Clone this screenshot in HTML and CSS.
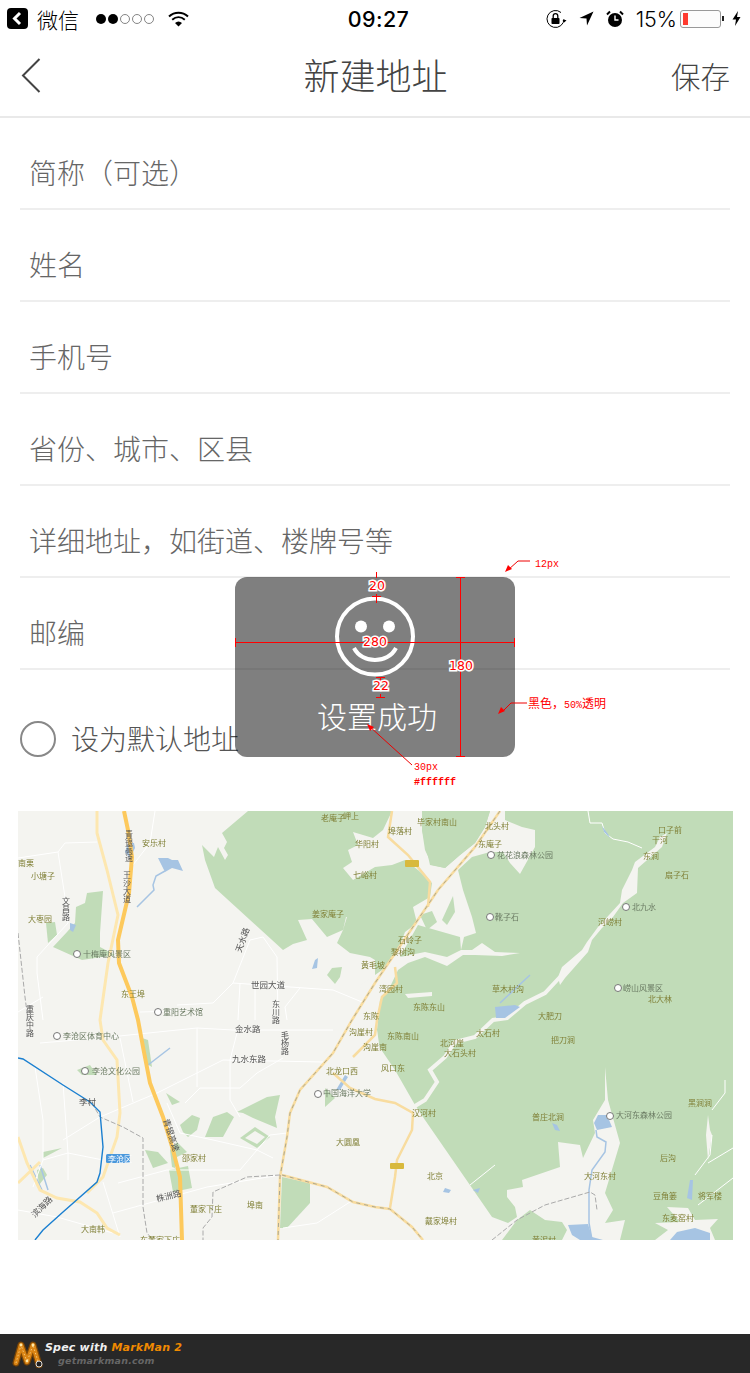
FILE: index.html
```html
<!DOCTYPE html>
<html lang="zh-CN">
<head>
<meta charset="utf-8">
<title>新建地址</title>
<link rel="stylesheet" href="styles.css">
</head>
<body>
<div class="page">
  <header class="status">
    <div class="status-left">
      <svg class="s-back" width="21" height="21" viewBox="0 0 21 21"><rect width="21" height="21" rx="4" fill="#000"/><path d="M13 5 L7.5 10.5 L13 16" fill="none" stroke="#fff" stroke-width="3"/></svg>
      <span class="s-app">微信</span>
      <svg class="s-dots" width="60" height="12" viewBox="0 0 60 12"><circle cx="6" cy="6" r="5" fill="#000"/><circle cx="18" cy="6" r="5" fill="#000"/><circle cx="30" cy="6" r="4.5" fill="none" stroke="#666" stroke-width=".8"/><circle cx="42" cy="6" r="4.5" fill="none" stroke="#666" stroke-width=".8"/><circle cx="54" cy="6" r="4.5" fill="none" stroke="#666" stroke-width=".8"/></svg>
      <svg class="s-wifi" width="21" height="16" viewBox="0 0 21 16"><path d="M1 5.5 C6.5 .5 14.5 .5 20 5.5" fill="none" stroke="#000" stroke-width="2"/><path d="M4.2 8.8 C8 5.5 13 5.5 16.8 8.8" fill="none" stroke="#000" stroke-width="2"/><path d="M7 12 C9.2 10 11.8 10 14 12 L10.5 15.5 Z" fill="#000"/></svg>
    </div>
    <div class="s-time">09:27</div>
    <div class="status-right">
      <svg class="s-lock" width="21" height="20" viewBox="0 0 21 20"><path d="M18 10 A8.5 8.5 0 1 1 15 3.500" fill="none" stroke="#000" stroke-width="1"/><path d="M16.500 11 L20.500 11 L18.500 13.500 Z" fill="#000"/><rect x="5.500" y="9" width="8" height="6" rx=".8" fill="#000"/><path d="M7.200 9 V7 A2.300 2.300 0 0 1 11.800 7 V9" fill="none" stroke="#000" stroke-width="1.300"/></svg>
      <svg class="s-loc" width="15" height="15" viewBox="0 0 15 15"><path d="M14.500 .5 L.5 7 L7.500 7.500 L8 14.500 Z" fill="#000"/></svg>
      <svg class="s-alarm" width="18" height="18" viewBox="0 0 18 18"><circle cx="9" cy="10" r="7" fill="#000"/><path d="M9 5.500 V10 H12.500" fill="none" stroke="#fff" stroke-width="1.400"/><path d="M1 4.500 L4 1.500 M14 1.500 L17 4.500" stroke="#000" stroke-width="2"/></svg>
      <span class="s-pct">15%</span>
      <div class="battery"><div class="battery-fill"></div></div>
      <div class="battery-tip"></div>
      <svg class="s-bolt" width="9" height="15" viewBox="0 0 9 15"><path d="M6 0 L.5 8.500 H4 L3 15 L8.500 6 H5 Z" fill="#000"/></svg>
    </div>
  </header>

  <nav class="nav">
    <svg class="nav-back" width="20" height="36" viewBox="0 0 20 36"><path d="M18.500 1 L2 17.500 L18.500 34" fill="none" stroke="#444" stroke-width="2"/></svg>
    <h1 class="nav-title">新建地址</h1>
    <span class="nav-save">保存</span>
  </nav>

  <section class="form">
    <div class="field">简称（可选）</div>
    <div class="field">姓名</div>
    <div class="field">手机号</div>
    <div class="field">省份、城市、区县</div>
    <div class="field">详细地址，如街道、楼牌号等</div>
    <div class="field">邮编</div>
  </section>

  <div class="default-row">
    <span class="radio"></span>
    <span class="default-label">设为默认地址</span>
  </div>

  <svg class="map" width="715" height="429" viewBox="18 811 715 429">
    <rect x="18" y="811" width="715" height="429" fill="#f4f4f0"/>
    <!-- big forest -->
    <path class="g" d="M248 811 L733 811 L733 1240 L620 1240 L625 1220 L605 1223 L613 1210 L605 1193 L620 1143 L608 1100 L605 1067 L605 1100 L593 1120 L595 1133 L583 1158 L580 1145 L558 1142 L560 1167 L522 1180 L523 1187 L507 1190 L507 1197 L515 1207 L517 1217 L508 1223 L492 1217 L425 1120 L415 1105 L395 1070 L378 1045 L375 1000 L375 960 L370 957 L350 953 L337 943 L343 930 L347 917 L346 917 L343 930 L327 937 L312 919 L298 920 L307 940 L293 944 L283 950 L215 888 L205 860 L202 845 L214 857 L218 847 L225 860 L228 855 L224 848 L227 842 L222 833 Z"/>
    <!-- valleys -->
    <path class="w" d="M353 832 L373 838 L383 830 L392 811 L422 811 L422 830 L430 865 L445 868 L460 855 L475 843 L485 827 L490 811 L505 811 L505 820 L522 827 L535 830 L535 847 L520 874 L510 863 L503 852 L490 852 L472 857 L458 870 L463 890 L472 917 L476 933 L464 937 L461 950 L472 950 L482 943 L495 952 L520 953 L502 956 L475 955 L463 955 L447 966 L425 957 L408 963 L398 970 L390 987 L380 1000 L377 1030 L380 1050 L372 1052 L362 1000 L360 985 L375 975 L385 968 L400 945 L405 932 L417 923 L413 907 L430 897 L432 883 L418 870 L405 860 L392 865 L375 867 L353 880 L343 868 L352 862 L348 850 L358 845 Z"/>
    <path class="w" d="M660 837 L667 833 L662 847 L638 868 L637 893 L623 903 L613 917 L602 928 L592 940 L588 952 L565 978 L560 985 L558 977 L562 967 L582 950 L587 942 L598 927 L620 903 L622 890 L632 870 L635 862 L655 847 Z"/>
    <path class="wthick" d="M560 977 L545 993 L525 1003 L507 1018 L493 1020 L475 1037 L455 1042 L445 1057 L430 1070 L437 1082 L425 1100 L415 1106"/>
    <path class="w" d="M405 994 L432 992 L432 996 L408 998 Z"/>
    <path class="w" d="M667 1207 L688 1208 L695 1220 L718 1219 L710 1228 L715 1240 L655 1240 L668 1230 L655 1223 L680 1222 Z"/>
    <path class="w" d="M708 1115 L710 1130 L712 1135 L708 1160 L706 1135 Z"/>
    <path class="minor" d="M725 1080 L725 1093 L712 1110 M712 1135 L710 1155 L695 1175 M733 1148 L708 1163 M733 1178 L698 1205 M588 811 L590 823 L602 823 L605 833 L613 839 L628 842 L642 848 M470 1185 L495 1165"/>
    <!-- patches on top of valleys -->
    <path class="g" d="M400 957 L418 925 L460 937 L461 950 L447 957 L425 952 Z"/>
    <path class="g" d="M422 811 L490 811 L485 827 L475 843 L460 855 L445 868 L432 865 L425 850 L422 830 Z"/>
    <path class="g" d="M453 896 L455 912 L447 925 L442 920 Z"/>
    <path class="g" d="M420 915 L432 911 L437 922 L427 930 Z" />
    <path class="g" d="M502 1240 L517 1220 L530 1210 L545 1220 L562 1222 L567 1230 L562 1240 Z"/>
    <path class="g" d="M327 975 L332 968 L342 967 L340 977 L335 984 Z"/>
    <!-- west parks -->
    <path class="g" d="M87 893 L103 891 L100 933 L100 947 L115 955 L82 960 L53 947 L67 932 L75 923 L76 907 L85 903 Z"/>
    <path class="g" d="M46 923 L55 922 L57 935 L48 943 Z"/>
    <path class="g" d="M142 1038 L148 1040 L152 1067 L145 1063 Z"/>
    <path class="g" d="M166 1093 L180 1102 L172 1105 Z"/>
    <path class="g" d="M180 1125 L192 1115 L200 1118 L197 1130 L188 1137 L183 1132 Z"/>
    <path class="g" d="M205 1137 L213 1117 L227 1112 L234 1117 L223 1137 Z"/>
    <path class="g" d="M237 1112 L267 1097 L280 1095 L275 1117 L277 1128 L253 1118 L243 1113 Z"/>
    <path class="g" d="M240 1138 L255 1127 L270 1137 L257 1148 Z"/>
    <path class="w" d="M245 1138 L255 1131 L265 1137 L257 1144 Z"/>
    <path class="g" d="M145 1150 L158 1152 L168 1163 L153 1168 Z"/>
    <path class="g" d="M170 1150 L177 1142 L187 1152 L177 1157 L175 1168 L172 1167 Z"/>
    <path class="g" d="M169 1170 L188 1166 L192 1188 L173 1192 Z"/>
    <path class="g" d="M43 1152 L62 1148 L43 1158 Z"/>
    <path class="g" d="M37 1170 L43 1168 L47 1175 L39 1185 Z"/>
    <path class="g" d="M282 1177 L310 1183 L310 1203 L287 1228 L280 1228 Z"/>
    <path class="g" d="M325 1088 L335 1098 L325 1107 Z"/>
    <path class="g" d="M77 1070 L90 1065 L97 1075 L82 1075 Z"/>
    <!-- water -->
    <path class="b" d="M158 858 L168 858 L172 860 L178 860 L183 871 L172 868 L165 872 Z"/>
    <path class="bs" d="M165 871 L156 876 L153 885 L154 890 L148 896 L137 907"/>
    <path class="b" d="M128 843 L134 843 L135 848 L130 858 L125 852 Z"/>
    <path class="b" d="M70 923 L76 925 L73 932 L70 930 Z"/>
    <path class="b" d="M315 960 L318 958 L317 968 L312 969 Z"/>
    <path class="b" d="M602 826 L608 834 L610 838 L604 832 Z"/>
    <path class="bs" d="M530 975 L500 1003"/>
    <path class="b" d="M495 1007 L515 1005 L520 1007 L505 1018 L496 1018 Z"/>
    <path class="b" d="M598 1115 L607 1115 L612 1127 L597 1130 L594 1123 Z"/>
    <path class="bs" d="M596 1130 L597 1137 L606 1142 L605 1152 L592 1170 L589 1190 L589 1223 L592 1240"/>
    <path class="b" d="M568 1225 L588 1224 L592 1237 L603 1240 L580 1240 L572 1235 Z"/>
    <path class="b" d="M552 1123 L557 1125 L560 1131 L555 1130 Z"/>
    <path class="b" d="M690 1180 L693 1180 L692 1200 L687 1198 Z"/>
    <path class="b" d="M670 1240 L677 1232 L695 1228 L710 1233 L710 1240 Z"/>
    <path class="b" d="M445 1188 L451 1190 L449 1193 L443 1192 Z"/>
    <path class="b" d="M473 1190 L480 1188 L478 1193 Z"/>
    <path class="b" d="M336 1090 L345 1075 L348 1077 L340 1090 Z"/>
    <path class="bs" d="M148 1065 L170 1048"/>
    <path class="bs" d="M40 1165 L48 1190 M30 1165 L42 1190"/>
    <!-- minor roads -->
    <path class="minor" d="M18 858 L58 852 L65 843 L97 842 M58 852 L67 910 L68 923 L37 957 L37 973 L43 1020 M155 811 L150 843 L133 865 M177 1005 L213 1003 L233 983 L250 940 L263 937 L277 957 L278 1020 M233 983 L333 990 L362 1002 M240 983 L238 1020 M255 983 L255 1020 M300 988 L285 1007 L287 1020 M18 1012 L43 997 M140 1012 L177 1011 M40 1043 L100 1038 L197 1028 L233 1030 L333 1030 M197 1028 L197 1087 M237 1033 L230 1060 L230 1100 L240 1117 M157 1093 L223 1060 L323 1062 M63 1140 L100 1117 L157 1093 M43 1160 L68 1153 L103 1160 M63 1083 L68 1153 L68 1180 M185 1103 L200 1088 L240 1088 L257 1073 L283 1058 M167 1103 L180 1133 L213 1140 L257 1150 L273 1158 M240 1170 L257 1150 L270 1135 L287 1133 M118 1183 L167 1170 L240 1170 M113 1213 L207 1187 L280 1175 M103 1182 L120 1237 M35 1067 L43 1120 L43 1160 L33 1187 M120 1038 L133 1102 M283 1228 L317 1223 L350 1202 M18 1210 L57 1217 L113 1233"/>
    <!-- roads -->
    <path class="r2" d="M97 811 L97 833 L107 870 L118 915 L108 963 L100 1020 L103 1040 L117 1060 L120 1113 L117 1137 L103 1177 L87 1193"/>
    <path class="r2" d="M18 1137 L27 1163 L40 1190 L57 1198 L80 1202 L97 1213 L107 1228 L120 1235 M18 1183 L40 1162"/>
    <path class="r3" d="M392 811 L388 837 L408 855 L430 882 L428 907 M395 967 L397 983 L382 997 L377 1020 L375 1035 L353 1057 M333 1073 L350 1088 L375 1099 L395 1103 L413 1113 L412 1130 L397 1160 L395 1177 L390 1208"/>
    <path class="r3" d="M500 811 L475 847 L438 890 L375 983 L352 1020 L333 1053 L300 1090 L290 1113 L287 1137 L280 1177 L278 1240 M282 1175 L327 1187 L353 1202 L375 1207 L390 1209 L412 1227 L423 1240"/>
    <path class="rail" d="M500 811 L475 847 L438 890 L375 983 L352 1020 L333 1053 L300 1090 L290 1113 L287 1137 L280 1177 L278 1240 M282 1175 L327 1187 L353 1202 L375 1207 L390 1209 L412 1227 L423 1240"/>
    <path class="hw" d="M124 811 L128 830 L132 857 L129 893 L118 940 L119 963 L132 997 L138 1020 L143 1047 L150 1083 L163 1117 L173 1150 L180 1177 L182 1240"/>
    <path class="rail2" d="M92 1103 L100 1117 L123 1127 L143 1138 L143 1207 L147 1233 L153 1240 M280 1175 L247 1177 L213 1192 L212 1217 L203 1228 L203 1240 M18 933 L25 997 L28 1020 M492 1240 L517 1220 L545 1205 L590 1192 L595 1195 L597 1210"/>
    <path class="metro" d="M18 1058 L23 1059 L63 1085 L90 1102 L100 1112 L103 1147 L100 1173 L97 1182 L63 1212 L43 1230 L35 1240"/>
    <!-- POI markers -->
    <circle class="poi" cx="77" cy="954" r="3.500"/><circle class="poi" cx="158" cy="1012" r="3.500"/><circle class="poi" cx="57" cy="1036" r="3.500"/><circle class="poi" cx="85" cy="1071" r="3.500"/><circle class="poi" cx="318" cy="1094" r="3.500"/><circle class="poi" cx="491" cy="855" r="3.500"/><circle class="poi" cx="490" cy="917" r="3.500"/><circle class="poi" cx="626" cy="907" r="3.500"/><circle class="poi" cx="618" cy="988" r="3.500"/><circle class="poi" cx="610" cy="1116" r="3.500"/>
    <!-- badges -->
    <rect x="106" y="1154" width="24" height="9" rx="1.500" fill="#4a98dc"/>
    <rect x="405" y="860" width="14" height="7" rx="1" fill="#d8b93c"/>
    <rect x="390" y="1163" width="14" height="6" rx="1" fill="#d8b93c"/>
    <text class="t-badge" x="108" y="1162">李沧区</text>
    <!-- labels -->
    <text class="t" x="142" y="846">安乐村</text><text class="t" x="18" y="866">南栗</text><text class="t" x="31" y="879">小塘子</text><text class="t" x="28" y="922">大枣园</text><text class="t-grey" x="83" y="957">十梅庵风景区</text><text class="t" x="121" y="997">东王埠</text><text class="t" x="321" y="821">老庵子</text><text class="t" x="343" y="819">岬上</text><text class="t" x="355" y="847">华阳村</text><text class="t" x="353" y="878">七峪村</text><text class="t" x="312" y="917">姜家庵子</text><text class="t" x="361" y="968">黄毛坡</text><text class="t-road" x="251" y="988">世园大道</text><text class="t-grey" x="163" y="1015">重阳艺术馆</text><text class="t" x="363" y="1019">东陈</text>
    <text class="t" x="417" y="825">毕家村南山</text><text class="t" x="388" y="834">埠落村</text><text class="t" x="485" y="829">北头村</text><text class="t" x="478" y="847">东庵子</text><text class="t-grey" x="497" y="858">花花浪森林公园</text><text class="t" x="658" y="833">口子前</text><text class="t" x="652" y="843">干河</text><text class="t" x="643" y="859">东涧</text><text class="t" x="665" y="878">扇子石</text><text class="t-grey" x="632" y="910">北九水</text><text class="t-grey" x="495" y="920">靴子石</text><text class="t" x="598" y="925">河崂村</text><text class="t" x="398" y="943">石岭子</text><text class="t" x="391" y="955">黎树沟</text><text class="t" x="379" y="992">湾园村</text><text class="t" x="492" y="992">草木村沟</text><text class="t-grey" x="623" y="991">崂山风景区</text><text class="t" x="648" y="1002">北大林</text><text class="t" x="413" y="1010">东陈东山</text><text class="t" x="538" y="1019">大肥刀</text>
    <text class="t-grey" x="63" y="1039">李沧区体育中心</text><text class="t-grey" x="92" y="1074">李沧文化公园</text><text class="t-road" x="79" y="1105">李村</text><text class="t-road" x="235" y="1032">金水路</text><text class="t-road" x="232" y="1062">九水东路</text><text class="t" x="349" y="1035">沟崖村</text><text class="t" x="363" y="1050">沟崖南</text><text class="t" x="326" y="1074">北龙口西</text><text class="t-grey" x="323" y="1096">中国海洋大学</text><text class="t" x="336" y="1145">大圆凰</text><text class="t" x="182" y="1161">邵家村</text><text class="t" x="190" y="1212">董家下庄</text><text class="t" x="247" y="1208">埠南</text><text class="t" x="81" y="1232">大南韩</text><text class="t" x="140" y="1243">东董家下庄</text>
    <text class="t" x="387" y="1039">东陈南山</text><text class="t" x="476" y="1036">太石村</text><text class="t" x="440" y="1046">北河崖</text><text class="t" x="444" y="1056">大石头村</text><text class="t" x="551" y="1043">把刀涧</text><text class="t" x="381" y="1071">风口东</text><text class="t" x="412" y="1116">汉河村</text><text class="t" x="532" y="1120">普庄北涧</text><text class="t-grey" x="616" y="1118">大河东森林公园</text><text class="t" x="688" y="1106">黑涧涧</text><text class="t" x="660" y="1161">后沟</text><text class="t" x="427" y="1179">北京</text><text class="t" x="584" y="1179">大河东村</text><text class="t" x="653" y="1199">豆角篓</text><text class="t" x="698" y="1199">将军楼</text><text class="t" x="662" y="1221">东麦窑村</text><text class="t" x="425" y="1224">戴家埠村</text><text class="t" x="532" y="1243">黄泥村</text>
    <text class="t-v" x="129" y="830">青银高速</text><text class="t-v" x="127" y="871">王沙大道</text><text class="t-v" x="66" y="897">文昌路</text><text class="t-v" x="276" y="1000">东川路</text><text class="t-v" x="285" y="1031">毛杨路</text><text class="t-v" x="30" y="1005">重庆中路</text>
    <text class="t-road" transform="translate(241 953) rotate(-70)" x="0" y="0">天水路</text>
    <text class="t-road" transform="translate(163 1120) rotate(72)" x="0" y="0">青银高速</text>
    <text class="t-road" transform="translate(157 1202) rotate(-14)" x="0" y="0">株洲路</text>
    <text class="t-road" transform="translate(35 1218) rotate(-45)" x="0" y="0">滨海路</text>
  </svg>

  <footer class="brand">
    <svg class="brand-logo" width="32" height="28" viewBox="0 0 32 28"><path d="M4 23 L9 5 L15 22 L21 5 L27 25" fill="none" stroke="#7a4506" stroke-width="7" stroke-linecap="round" stroke-linejoin="round"/><path d="M4 23 L9 5 L15 22 L21 5 L27 25" fill="none" stroke="#d98414" stroke-width="4.500" stroke-linecap="round" stroke-linejoin="round"/><path d="M4 23 L9 5 L15 22 L21 5 L27 25" fill="none" stroke="#f6c778" stroke-width="1" stroke-dasharray="1.500 2"/><circle cx="9" cy="5" r="1.400" fill="#ffe9a8"/><circle cx="21" cy="5" r="1.400" fill="#ffe9a8"/><circle cx="15" cy="21" r="1.400" fill="#ffe9a8"/><circle cx="27" cy="24" r="3" fill="#222" stroke="#ddd" stroke-width="1"/></svg>
    <div class="brand-text">
      <div class="brand-line">Spec with <span class="brand-accent">MarkMan 2</span></div>
      <div class="brand-url">getmarkman.com</div>
    </div>
  </footer>

  <div class="toast">
    <svg class="toast-icon" width="80" height="81" viewBox="0 0 80 81"><circle cx="40" cy="40.500" r="38" fill="none" stroke="#fff" stroke-width="4"/><circle cx="26" cy="30.500" r="6" fill="#fff"/><circle cx="54" cy="30.500" r="6" fill="#fff"/><path d="M19 52 C27 68 53 68 61 52" fill="none" stroke="#fff" stroke-width="4"/></svg>
    <div class="toast-text">设置成功</div>
  </div>

  <svg class="marks" width="750" height="1373" viewBox="0 0 750 1373">
    <path class="mk" d="M235.500 642.500 H515 M235.500 638 V647 M514.500 638 V647 M460.500 577 V757 M456 577.500 H465 M456 756.500 H465 M376.500 572 V578 M376.500 594 V603 M372 596.500 H381 M380.500 677 V682 M376 677.500 H385 M376 697.500 H385 M380.500 694 V698"/>
    <path class="mk-thin" d="M530 561 H518 L508 570 M527 703 H511 L502 712 M412 765 L369 726"/>
    <path class="mk-fill" d="M505 572 L508 565 L512 569 Z M498 714 L501 707 L505 711 Z M367 724 L374 727 L370 731 Z"/>
    <text class="lab" x="375" y="646">280</text>
    <text class="lab" x="461" y="670">180</text>
    <text class="lab" x="377" y="590">20</text>
    <text class="lab" x="381" y="690">22</text>
    <text class="note" x="535" y="567">12px</text>
    <text class="note" x="528" y="708"><tspan class="note-cjk">黑色，</tspan>50%<tspan class="note-cjk">透明</tspan></text>
    <text class="note" x="414" y="770">30px</text>
    <text class="note note-bold" x="414" y="785">#ffffff</text>
  </svg>
</div>
</body>
</html>
```

FILE: styles.css
```css
* { box-sizing: border-box; }
html, body { margin: 0; padding: 0; }
body {
  background: #fff;
  font-family: "Noto Sans CJK SC", "Noto Sans", sans-serif;
  overflow: hidden;
}
.page {
  position: relative;
  width: 750px;
  height: 1373px;
  display: flex;
  flex-direction: column;
  overflow: hidden;
}
.status {
  height: 40px;
  display: grid;
  grid-template-columns: 1fr auto 1fr;
  align-items: center;
  padding: 0 9px 3px 7px;
  color: #000;
}
.status-left, .status-right { display: flex; align-items: center; }
.status-right { justify-content: flex-end; }
.s-app { font-size: 21px; margin-left: 9px; line-height: 24px; font-weight: 300; }
.s-dots { margin-left: 16px; }
.s-wifi { margin-left: 13px; }
.s-time { font-family: Inter, "Liberation Sans", sans-serif; font-size: 21.500px; font-weight: 500; letter-spacing: .4px; margin-left: 9px; }
.s-loc { margin-left: 12px; }
.s-alarm { margin-left: 12px; }
.s-pct { font-family: Inter, "Liberation Sans", sans-serif; font-size: 21.500px; font-weight: 300; margin-left: 12px; }
.battery { width: 41px; height: 18px; margin-left: 3px; border: 1px solid #999; border-radius: 3px; padding: 2px; background: #fcfcfc; }
.battery-fill { width: 5px; height: 100%; background: #ff3b30; }
.battery-tip { width: 2px; height: 5px; background: #222; margin-left: 1px; }
.s-bolt { margin-left: 8px; }

.nav {
  height: 78px;
  display: grid;
  grid-template-columns: 1fr auto 1fr;
  align-items: center;
  padding: 0 20px 5px 21px;
  border-bottom: 2px solid #e9e9e9;
  color: #444;
}
.nav-back { justify-self: start; }
.nav-title { margin: 0 0 4px; font-size: 36px; font-weight: 300; line-height: 50px; }
.nav-save { justify-self: end; font-size: 29.500px; font-weight: 300; line-height: 40px; margin-bottom: 2px; }

.form { padding: 0 20px; }
.field {
  height: 92px;
  padding: 34px 0 0 9px;
  border-bottom: 2px solid #eee;
  font-size: 28px;
  font-weight: 300;
  line-height: 40px;
  color: #666;
}
.default-row {
  display: flex;
  align-items: center;
  gap: 15px;
  margin: 50px 0 0 20px;
  height: 38px;
}
.radio { width: 36px; height: 36px; border: 2px solid #888; border-radius: 50%; }
.default-label { font-size: 28px; font-weight: 300; color: #555; line-height: 38px; margin-bottom: 2px; }

.map {
  display: block;
  margin: 53px 0 0 18px;
  filter: blur(.45px);
}
.g { fill: #c1dcb8; }
.w { fill: #f4f4f0; }
.wthick { fill: none; stroke: #f4f4f0; stroke-width: 4; }
.b { fill: #a6c4e3; }
.bs { fill: none; stroke: #a6c4e3; stroke-width: 1.500; }
.minor { fill: none; stroke: #fff; stroke-width: 1; }
.hw { fill: none; stroke: #fdc95c; stroke-width: 4; }
.r2 { fill: none; stroke: #fde7b0; stroke-width: 3; }
.r3 { fill: none; stroke: #f8dc9f; stroke-width: 2.500; }
.rail { fill: none; stroke: #9a9a8c; stroke-width: .8; stroke-dasharray: 4 4; }
.rail2 { fill: none; stroke: #aaa; stroke-width: 1; stroke-dasharray: 5 2; }
.metro { fill: none; stroke: #1a7fd0; stroke-width: 1.400; }
.poi { fill: #fff; stroke: #777; stroke-width: 1; }
.t, .t-grey, .t-road, .t-v, .t-badge { font-family: "Noto Sans CJK SC", sans-serif; font-size: 8px; }
.t { fill: #7f7f35; }
.t-grey { fill: #6a7a62; }
.t-road { fill: #555; font-size: 8.500px; }
.t-v { fill: #555; writing-mode: vertical-rl; font-size: 8px; }
.t-badge { fill: #fff; }

.brand {
  margin-top: auto;
  height: 39px;
  background: #282828;
  display: flex;
  align-items: center;
  padding-left: 12px;
  font-family: "DejaVu Sans", sans-serif;
  font-weight: 700;
  font-style: italic;
}
.brand-logo { flex: none; }
.brand-text { margin-left: 1px; }
.brand-line { font-size: 11px; line-height: 15px; color: #f0f0f0; letter-spacing: .2px; }
.brand-accent { color: #f08a00; }
.brand-url { font-size: 9.500px; line-height: 12px; color: #666; margin-left: 13px; letter-spacing: .2px; }

.toast {
  position: absolute;
  left: 235px;
  top: 577px;
  width: 280px;
  height: 180px;
  border-radius: 12px;
  background: rgba(0,0,0,.5);
  display: flex;
  flex-direction: column;
  align-items: center;
  padding-top: 19px;
  color: #fff;
}
.toast-icon { display: block; flex: none; }
.toast-text { margin-top: 22px; font-size: 30px; font-weight: 300; line-height: 32px; padding-left: 4px; }

.marks { position: absolute; left: 0; top: 0; pointer-events: none; }
.mk { fill: none; stroke: #f00; stroke-width: 1; }
.mk-thin { fill: none; stroke: #e00; stroke-width: 1; }
.mk-fill { fill: #f00; }
.lab {
  font-family: "DejaVu Sans", sans-serif;
  font-size: 12.500px;
  fill: #f00;
  stroke: #fff;
  stroke-width: 3px;
  paint-order: stroke;
  text-anchor: middle;
}
.note {
  font-family: "Liberation Mono", "Noto Sans CJK SC", monospace;
  font-size: 10px;
  fill: #f00;
}
.note-cjk { font-family: "Noto Sans CJK SC", sans-serif; font-size: 12px; }
.note-bold { font-weight: 700; }
```
